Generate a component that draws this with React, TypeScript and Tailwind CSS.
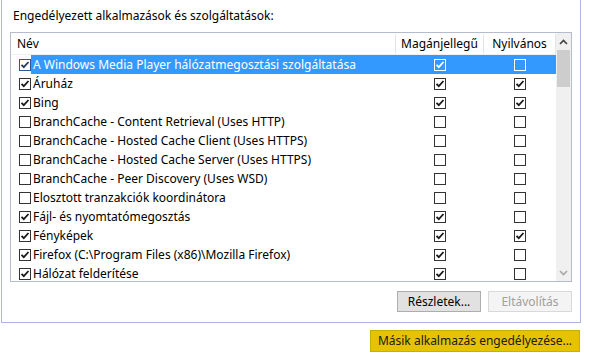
import React from 'react'

type Row = { name: string; on: boolean; priv: boolean; pub: boolean }

const rows: Row[] = [
  { name: 'A Windows Media Player hálózatmegosztási szolgáltatása', on: true, priv: true, pub: false },
  { name: 'Áruház', on: true, priv: true, pub: true },
  { name: 'Bing', on: true, priv: true, pub: true },
  { name: 'BranchCache - Content Retrieval (Uses HTTP)', on: false, priv: false, pub: false },
  { name: 'BranchCache - Hosted Cache Client (Uses HTTPS)', on: false, priv: false, pub: false },
  { name: 'BranchCache - Hosted Cache Server (Uses HTTPS)', on: false, priv: false, pub: false },
  { name: 'BranchCache - Peer Discovery (Uses WSD)', on: false, priv: false, pub: false },
  { name: 'Elosztott tranzakciók koordinátora', on: false, priv: false, pub: false },
  { name: 'Fájl- és nyomtatómegosztás', on: true, priv: true, pub: false },
  { name: 'Fényképek', on: true, priv: true, pub: true },
  { name: 'Firefox (C:\\Program Files (x86)\\Mozilla Firefox)', on: true, priv: true, pub: false },
  { name: 'Hálózat felderítése', on: true, priv: true, pub: false },
]

function Box({ checked, tone = 'dark' }: { checked: boolean; tone?: 'dark' | 'white' | 'focus' }) {
  const stroke = tone === 'white' ? '#ffffff' : tone === 'focus' ? '#1d3d66' : '#1a1a1a'
  const border =
    tone === 'white' ? 'border-white' : tone === 'focus' ? 'border-[#2a5a96]' : 'border-[#333333]'
  return (
    <div className={`w-[12px] h-[12px] border ${border} flex items-center justify-center shrink-0`}>
      {checked && (
        <svg width="10" height="10" viewBox="0 0 10 10">
          <path d="M1.5 4.8 L3.8 7.2 L8.5 2" fill="none" stroke={stroke} strokeWidth="1.8" />
        </svg>
      )}
    </div>
  )
}

function Arrow({ up }: { up?: boolean }) {
  return (
    <svg width="9" height="6" viewBox="0 0 9 6">
      <path
        d={up ? 'M1 5 L4.5 1.5 L8 5' : 'M1 1 L4.5 4.5 L8 1'}
        fill="none"
        stroke={up ? '#404040' : '#a8a8a8'}
        strokeWidth="1.6"
      />
    </svg>
  )
}

export default function App() {
  return (
    <div className="w-[590px] h-[360px] bg-white text-black text-[12px] font-['Noto_Sans',sans-serif] overflow-hidden">
      <div className="ml-[1px] w-[580px] border-x border-b border-[#b1b4e0] px-2 pb-[10px]">
        <div className="pt-[8px] leading-[16px] pl-[3px] mb-[8px]">Engedélyezett alkalmazások és szolgáltatások:</div>

        <div className="h-[250px] border border-[#b7bccd] flex overflow-hidden">
          <div className="flex-1 flex flex-col">
            <div className="h-[22px] flex items-center border-b border-[#f0f0f0] shrink-0 pt-[1px]">
              <div className="w-[385px] h-full flex items-center pl-[6px] border-r border-[#e5e5e5]">Név</div>
              <div className="w-[88px] h-full flex items-center justify-center border-r border-[#e5e5e5]">Magánjellegű</div>
              <div className="w-[72px] h-full flex items-center justify-center border-r border-[#e5e5e5]">Nyilvános</div>
            </div>
            <div className="flex flex-col">
              {rows.map((r, i) => {
                const sel = i === 0
                return (
                  <div key={i} className="h-[19px] flex items-center shrink-0">
                    <div className="w-[20px] h-full flex items-center pl-[8px]">
                      <Box checked={r.on} tone={sel ? 'focus' : 'dark'} />
                    </div>
                    <div className={`flex-1 h-full flex items-center ${sel ? 'bg-[#3399ff] text-white' : ''}`}>
                      <div className="w-[365px] pl-[2px] pt-[1px] whitespace-nowrap leading-[18px]">{r.name}</div>
                      <div className="w-[88px] flex justify-center">
                        <Box checked={r.priv} tone={sel ? 'white' : 'dark'} />
                      </div>
                      <div className="w-[72px] flex justify-center">
                        <Box checked={r.pub} tone={sel ? 'white' : 'dark'} />
                      </div>
                    </div>
                  </div>
                )
              })}
            </div>
          </div>

          <div className="w-[15px] bg-[#f0f0f0] flex flex-col items-center shrink-0">
            <div className="h-[17px] flex items-center justify-center">
              <Arrow up />
            </div>
            <div className="w-[13px] h-[37px] bg-[#cdcdcd]" />
            <div className="flex-1" />
            <div className="h-[17px] flex items-center justify-center">
              <Arrow />
            </div>
          </div>
        </div>

        <div className="mt-[9px] flex justify-end gap-[7px]">
          <div className="w-[84px] h-[21px] border border-[#adadad] bg-[#e1e1e1] flex items-center justify-center">
            Részletek...
          </div>
          <div className="w-[84px] h-[21px] border border-[#d9d9d9] bg-[#f4f4f4] text-[#a0a0a0] flex items-center justify-center">
            Eltávolítás
          </div>
        </div>
      </div>

      <div className="mt-[7px] flex justify-end pr-[10px]">
        <div className="w-[210px] h-[22px] border border-[#c9ad00] bg-[#e6c300] flex items-center justify-center text-[#1a1a1a]">
          Másik alkalmazás engedélyezése...
        </div>
      </div>
    </div>
  )
}
